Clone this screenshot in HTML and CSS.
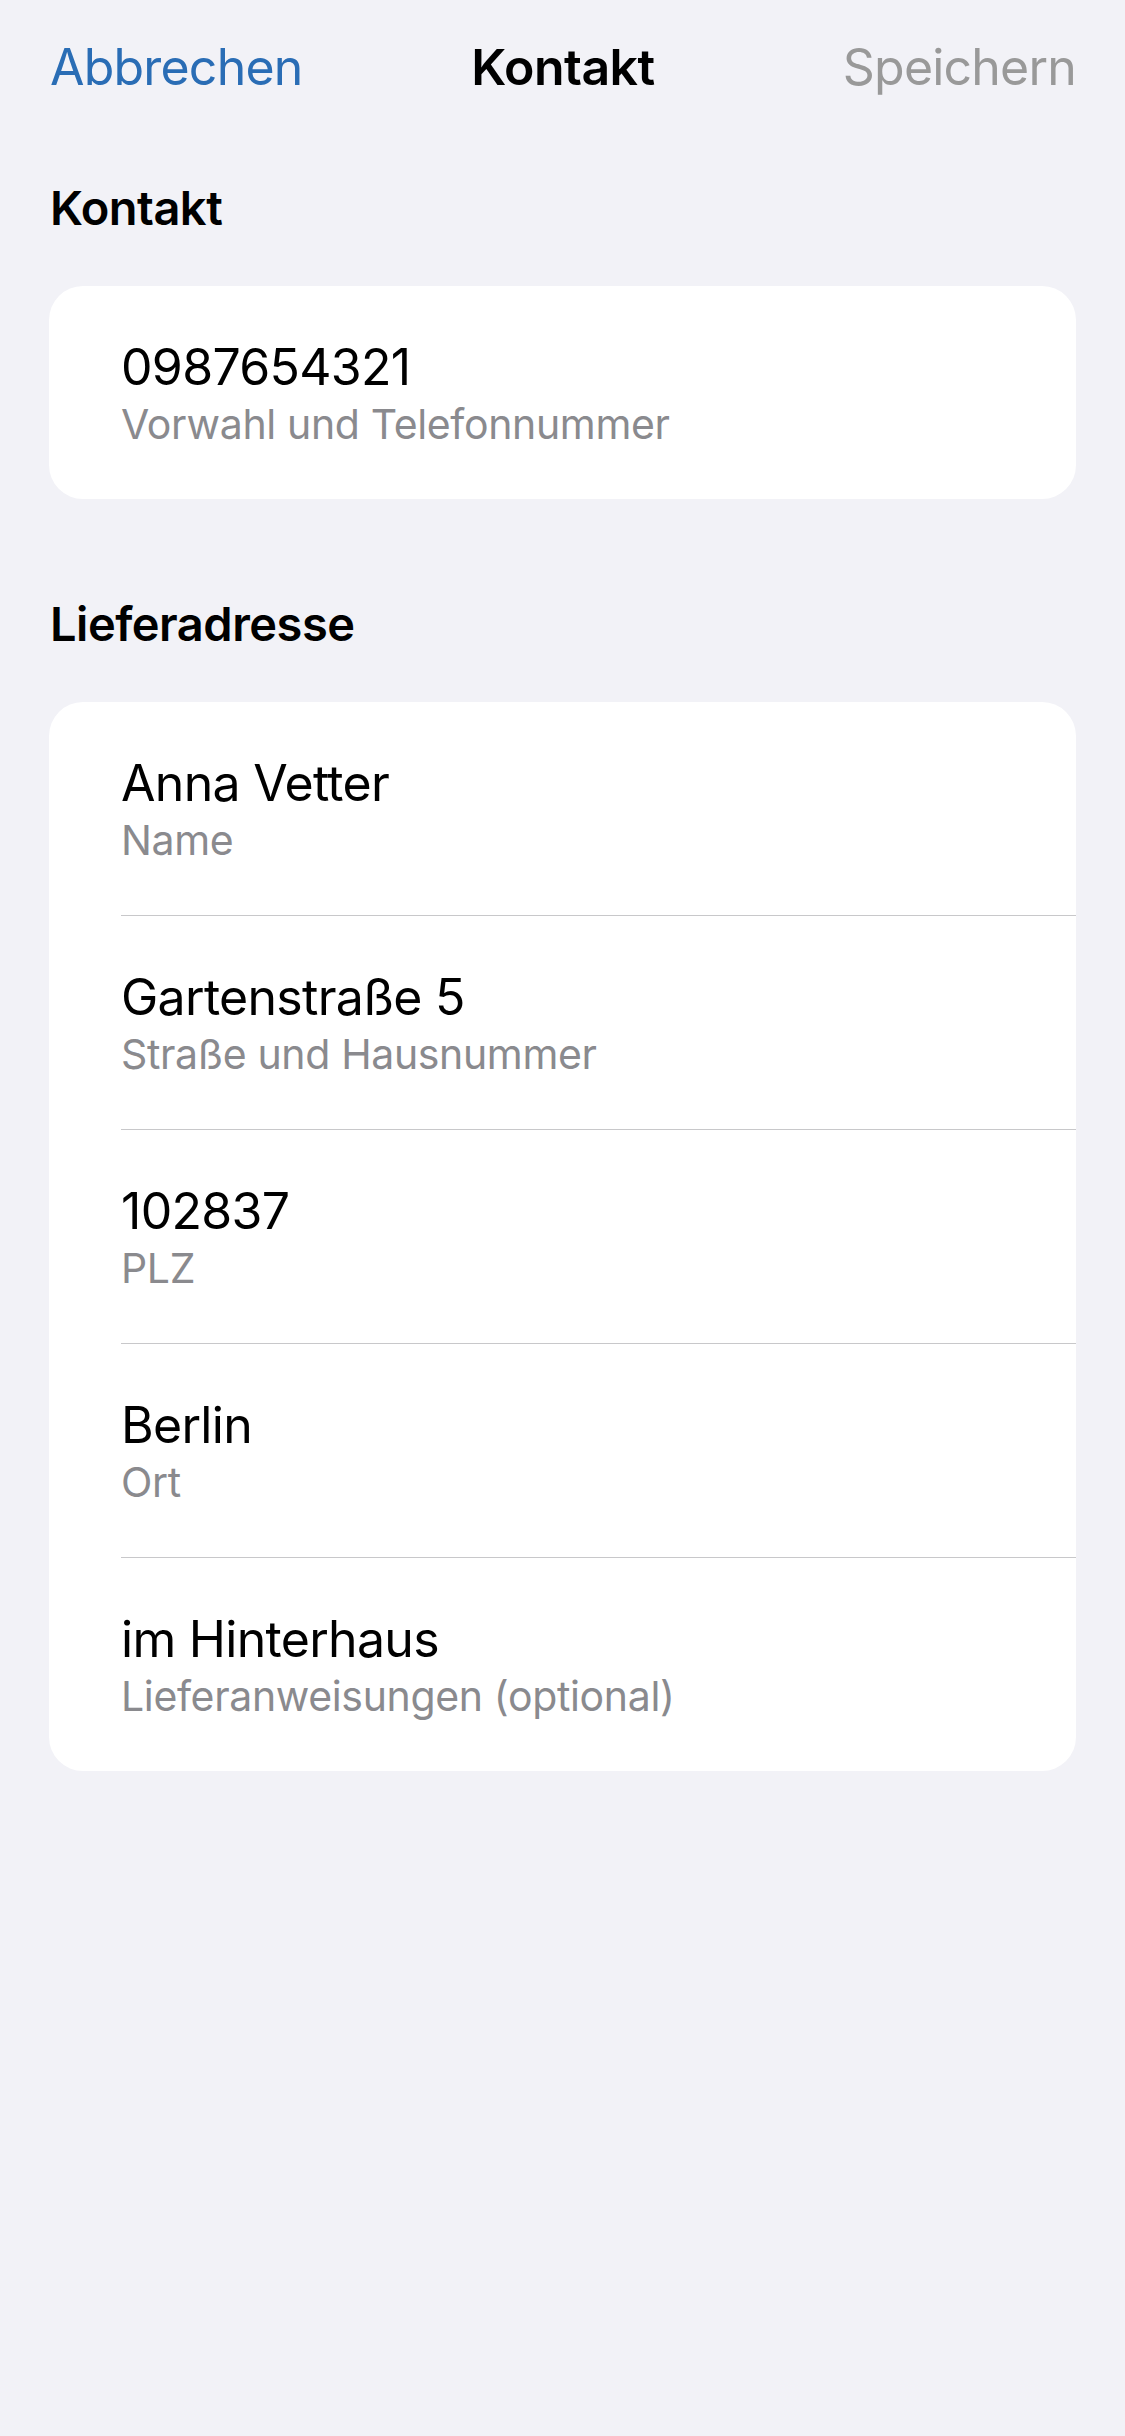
FILE: index.html
```html
<!DOCTYPE html>
<html lang="de">
<head>
<meta charset="utf-8">
<title>Kontakt</title>
<link rel="stylesheet" href="styles.css">
</head>
<body>
<div class="screen">
  <header class="nav">
    <span class="nav-btn cancel">Abbrechen</span>
    <span class="nav-title">Kontakt</span>
    <span class="nav-btn save">Speichern</span>
  </header>

  <h2 class="section-title first">Kontakt</h2>
  <div class="card">
    <div class="row">
      <div class="value">0987654321</div>
      <div class="label">Vorwahl und Telefonnummer</div>
    </div>
  </div>

  <h2 class="section-title">Lieferadresse</h2>
  <div class="card">
    <div class="row">
      <div class="value">Anna Vetter</div>
      <div class="label">Name</div>
    </div>
    <div class="row">
      <div class="value">Gartenstraße 5</div>
      <div class="label">Straße und Hausnummer</div>
    </div>
    <div class="row">
      <div class="value">102837</div>
      <div class="label">PLZ</div>
    </div>
    <div class="row">
      <div class="value">Berlin</div>
      <div class="label">Ort</div>
    </div>
    <div class="row">
      <div class="value">im Hinterhaus</div>
      <div class="label">Lieferanweisungen (optional)</div>
    </div>
  </div>
</div>
</body>
</html>
```

FILE: styles.css
```css
* { box-sizing: border-box; }

html, body {
  margin: 0;
  padding: 0;
  background: #f2f2f7;
}

body {
  font-family: Inter, "Noto Sans", "Liberation Sans", sans-serif;
  color: #000;
  min-height: 2436px;
}

.screen {
  display: flex;
  flex-direction: column;
}

.nav {
  display: grid;
  grid-template-columns: 1fr auto 1fr;
  align-items: center;
  padding: 37px 49px 0 50px;
  height: 97px;
  font-size: 50px;
  line-height: 60px;
  letter-spacing: -0.8px;
}

.nav-btn.cancel {
  color: #2a6db5;
  justify-self: start;
}
.nav-btn.save {
  color: #999999;
  justify-self: end;
}
.nav-title {
  font-weight: 600;
  letter-spacing: -0.5px;
}

.section-title {
  margin: 82px 0 0 0;
  padding: 0 50px;
  font-size: 47px;
  line-height: 58px;
  font-weight: 600;
  letter-spacing: -0.5px;
}

.section-title + .card { margin-top: 49px; }
.card + .section-title { margin-top: 96px; }

.card {
  margin: 0 49px;
  background: #ffffff;
  border-radius: 34px;
  overflow: hidden;
  display: flex;
  flex-direction: column;
}

.row {
  margin-left: 72px;
  padding: 51px 0 50px 0;
  border-bottom: 1px solid #c8c8ca;
}
.row:last-child { border-bottom: none; }

.value {
  font-size: 50px;
  line-height: 60px;
  letter-spacing: -0.7px;
  color: #000;
}

.label {
  margin-top: 2px;
  font-size: 41px;
  line-height: 50px;
  letter-spacing: -0.35px;
  color: #8a8a8e;
}
```
